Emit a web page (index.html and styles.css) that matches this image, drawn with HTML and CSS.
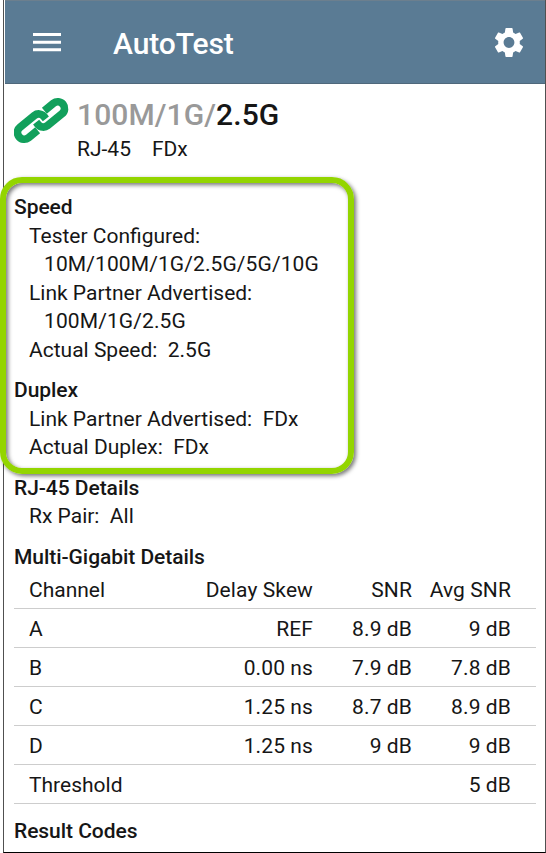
FILE: index.html
```
<!DOCTYPE html>
<html lang="en">
<head>
    <meta charset="UTF-8">
    <meta name="viewport" content="width=device-width, initial-scale=1.0">
    <title>AutoTest</title>
    <link rel="stylesheet" href="styles.css">
</head>
<body>
    <div class="screen">
        <header class="app-bar">
            <svg class="menu-icon" viewBox="0 0 28 20">
                <path d="M0 2.5h28M0 10.2h28M0 17.7h28" stroke="#fff" stroke-width="3"/>
            </svg>
            <h1 class="app-title">AutoTest</h1>
            <svg class="gear-icon" viewBox="2 2 20 20">
                <path fill="#fff" d="M19.14 12.94c.04-.3.06-.61.06-.94 0-.32-.02-.64-.07-.94l2.03-1.58c.18-.14.23-.41.12-.61l-1.92-3.32c-.12-.22-.37-.29-.59-.22l-2.39.96c-.5-.38-1.03-.7-1.62-.94l-.36-2.54c-.04-.24-.24-.41-.48-.41h-3.84c-.24 0-.43.17-.47.41l-.36 2.54c-.59.24-1.13.57-1.62.94l-2.39-.96c-.22-.08-.47 0-.59.22L2.74 8.87c-.12.21-.08.47.12.61l2.03 1.58c-.05.3-.09.63-.09.94s.02.64.07.94l-2.03 1.58c-.18.14-.23.41-.12.61l1.92 3.32c.12.22.37.29.59.22l2.39-.96c.5.38 1.03.7 1.62.94l.36 2.54c.05.24.24.41.48.41h3.84c.24 0 .44-.17.47-.41l.36-2.54c.59-.24 1.13-.56 1.62-.94l2.39.96c.22.08.47 0 .59-.22l1.92-3.32c.12-.22.07-.47-.12-.61l-2.01-1.58zM12 15.6c-1.98 0-3.6-1.62-3.6-3.6s1.62-3.6 3.6-3.6 3.6 1.62 3.6 3.6-1.62 3.6-3.6 3.6z"/>
            </svg>
        </header>

        <main class="content">
            <div class="link-summary">
                <svg class="link-icon" viewBox="6 3 56 54">
                    <g transform="translate(33 30.5) rotate(-39)" fill="none" stroke="#12a05c" stroke-width="7.8">
                        <path d="M-8.8 5.5H-20.5A6.75 6.75 0 0 1 -20.5 -8H-2A6.8 6.8 0 0 1 4.8 -1.2V1.8"/>
                        <path transform="rotate(180)" d="M-8.8 5.5H-20.5A6.75 6.75 0 0 1 -20.5 -8H-2A6.8 6.8 0 0 1 4.8 -1.2V1.8"/>
                    </g>
                </svg>
                <div>
                    <div class="link-speed"><span class="inactive">100M/1G/</span>2.5G</div>
                    <div class="link-type"><span>RJ-45</span><span>FDx</span></div>
                </div>
            </div>

            <div class="highlighted">
                <section class="group">
                    <h2>Speed</h2>
                    <p>Tester Configured:</p>
                    <p class="value">10M/100M/1G/2.5G/5G/10G</p>
                    <p>Link Partner Advertised:</p>
                    <p class="value">100M/1G/2.5G</p>
                    <p>Actual Speed:&nbsp; 2.5G</p>
                </section>
                <section class="group">
                    <h2>Duplex</h2>
                    <p>Link Partner Advertised:&nbsp; FDx</p>
                    <p>Actual Duplex:&nbsp; FDx</p>
                </section>
            </div>

            <section class="group">
                <h2>RJ-45 Details</h2>
                <p>Rx Pair:&nbsp; All</p>
            </section>

            <section>
                <h2>Multi-Gigabit Details</h2>
                <table class="channels">
                    <thead>
                        <tr><th>Channel</th><th>Delay Skew</th><th>SNR</th><th>Avg SNR</th></tr>
                    </thead>
                    <tbody>
                        <tr><td>A</td><td>REF</td><td>8.9 dB</td><td>9 dB</td></tr>
                        <tr><td>B</td><td>0.00 ns</td><td>7.9 dB</td><td>7.8 dB</td></tr>
                        <tr><td>C</td><td>1.25 ns</td><td>8.7 dB</td><td>8.9 dB</td></tr>
                        <tr><td>D</td><td>1.25 ns</td><td>9 dB</td><td>9 dB</td></tr>
                        <tr><td>Threshold</td><td></td><td></td><td>5 dB</td></tr>
                    </tbody>
                </table>
            </section>

            <h2 class="result-codes">Result Codes</h2>
        </main>
    </div>
</body>
</html>
```
FILE: styles.css
```
:root {
    --bar-color: #5a7b94;
    --highlight: #93d500;
    --text-color: #161616;
    --line-color: #cdcdcd;
}

*,
*::after {
    box-sizing: border-box;
    margin: 0;
    padding: 0;
}

body {
    font-family: Roboto, "Liberation Sans", sans-serif;
    font-size: 21px;
    line-height: 28.5px;
    color: var(--text-color);
    background-color: #fff;
    overflow: hidden;
}

.screen {
    height: 853px;
    margin-left: 3px;
    border: solid #505050;
    border-width: 0 1px 1px;
    border-bottom-color: #000;
}

.app-bar {
    display: flex;
    align-items: center;
    height: 84px;
    margin-left: 1px;
    padding: 0 21px 0 28px;
    background-color: var(--bar-color);
    border-top: 1px solid #6c7f8e;
    border-bottom: 1px solid #4f687b;
    color: #fff;
}

.menu-icon {
    width: 28px;
    height: 20px;
}

.app-title {
    margin-left: 52px;
    font-size: 30px;
    font-weight: 500;
    line-height: 40px;
    letter-spacing: -0.1px;
    padding-top: 3px;
}

.gear-icon {
    width: 30px;
    height: 31px;
    margin-left: auto;
}

.content {
    padding: 9px 9px 0 10px;
}

.link-summary {
    display: flex;
    height: 100px;
}

.link-icon {
    width: 56px;
    height: 54px;
    margin-right: 7px;
}

.link-speed {
    font-size: 30px;
    font-weight: 500;
    line-height: 40px;
    letter-spacing: 0.1px;
    padding-top: 2px;
}

.inactive {
    color: #999;
}

.link-type {
    display: flex;
    gap: 21px;
}

h2 {
    font-size: 21px;
    font-weight: 500;
    letter-spacing: -0.05px;
}

.group {
    margin-bottom: 12px;
}

.group p {
    padding-left: 15px;
}

.group .value {
    padding-left: 30px;
    letter-spacing: 0.1px;
}

.highlighted {
    position: relative;
}

/* rounded frame drawn around the speed and duplex groups */
.highlighted::after {
    content: "";
    position: absolute;
    top: -16px;
    left: -14px;
    width: 354px;
    height: 297px;
    border: 6px solid var(--highlight);
    border-radius: 22px;
    box-shadow: 2px 2px 4px rgba(0, 0, 0, 0.55), inset 2px 2px 4px rgba(0, 0, 0, 0.55);
}

.channels {
    width: 522px;
    table-layout: fixed;
    border-spacing: 0;
}

.channels th,
.channels td {
    height: 39px;
    padding-top: 2px;
    font-weight: 400;
    letter-spacing: 0.1px;
    text-align: right;
    border-bottom: 1px solid var(--line-color);
}

.channels th {
    height: 38px;
    padding-top: 1px;
}

.channels th:first-child,
.channels td:first-child {
    width: 140px;
    padding-left: 15px;
    letter-spacing: 0;
    text-align: left;
}

.channels th:nth-child(2) {
    width: 159px;
}

.channels th:nth-child(3) {
    width: 99px;
}

.channels th:last-child,
.channels td:last-child {
    padding-right: 25px;
}

.result-codes {
    margin-top: 13px;
}
```
